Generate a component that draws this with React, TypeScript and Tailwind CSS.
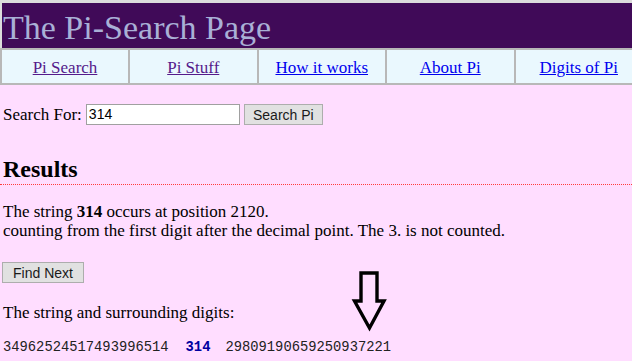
export default function App() {
  const links = [
    { label: "Pi Search", visited: true },
    { label: "Pi Stuff", visited: true },
    { label: "How it works", visited: false },
    { label: "About Pi", visited: false },
    { label: "Digits of Pi", visited: false },
  ];

  return (
    <div className="relative w-[632px] h-[361px] overflow-hidden bg-[#ffddff] font-['Liberation_Serif',serif] text-[17px] text-black">
      {/* header */}
      <div className="border-t-[3px] border-l-[2px] border-[#dcdcdc] bg-[#400a58] h-[48px] pt-[8px] pl-[1px]">
        <h1 className="text-[34px] leading-[34px] text-[#a9b0d6] font-normal">The Pi-Search Page</h1>
      </div>

      {/* nav */}
      <div className="flex w-[642px] bg-[#eaf8fe] border-y-2 border-l-2 border-[#b8b8b8] h-[37px]">
        {links.map((l) => (
          <div
            key={l.label}
            className="w-[128.5px] shrink-0 border-r-2 border-[#b8b8b8] flex justify-center pt-[1px] leading-[33px] first:w-[128px]"
          >
            <a href="#" className={"underline " + (l.visited ? "text-[#551a8b]" : "text-[#0000ee]")}>
              {l.label}
            </a>
          </div>
        ))}
      </div>

      {/* search */}
      <div className="mt-[19px] pl-[3px] h-[21px] flex items-center">
        <span>Search For:</span>
        <input
          defaultValue="314"
          className="ml-[4px] w-[154px] h-[21px] bg-white border border-[#a0a0a0] px-[2px] font-['Liberation_Sans',sans-serif] text-[14px] outline-none"
        />
        <button className="ml-[4px] w-[79px] h-[21px] bg-[#e1e1e1] border border-[#adadad] font-['Liberation_Sans',sans-serif] text-[14px] text-[#1a1a1a]">
          Search Pi
        </button>
      </div>

      {/* results */}
      <h2 className="mt-[32px] pl-[3px] text-[24px] leading-[24px] font-bold pb-[3px] border-b border-dotted border-[#ff3b3b]">
        Results
      </h2>

      <p className="mt-[17px] pl-[3px] leading-[19px]">
        The string <b>314</b> occurs at position 2120.
        <br />
        counting from the first digit after the decimal point. The 3. is not counted.
      </p>

      <div className="mt-[20px] pl-[2px]">
        <button className="w-[82px] h-[21px] bg-[#e1e1e1] border border-[#adadad] font-['Liberation_Sans',sans-serif] text-[14px] text-[#1a1a1a]">
          Find Next
        </button>
      </div>

      <p className="mt-[17px] pl-[3px] leading-[19px]">The string and surrounding digits:</p>

      <div className="mt-[18px] pl-[3px] leading-[16px] font-['Liberation_Mono',monospace] text-[13.8px] text-[#222] whitespace-pre">
        <span>34962524517493996514</span>
        <span className="ml-[17px] font-bold text-[#0000a0]">314</span>
        <span className="ml-[15px]">29809190659250937221</span>
      </div>

      {/* arrow overlay */}
      <svg className="absolute left-[350px] top-[268px]" width="40" height="66" viewBox="350 268 40 66">
        <polygon
          points="361,273 377,273 377,301 384,301 369.5,328 354.5,301 361,301"
          fill="none"
          stroke="#000"
          strokeWidth="3.4"
          strokeLinejoin="miter"
        />
      </svg>
    </div>
  );
}
